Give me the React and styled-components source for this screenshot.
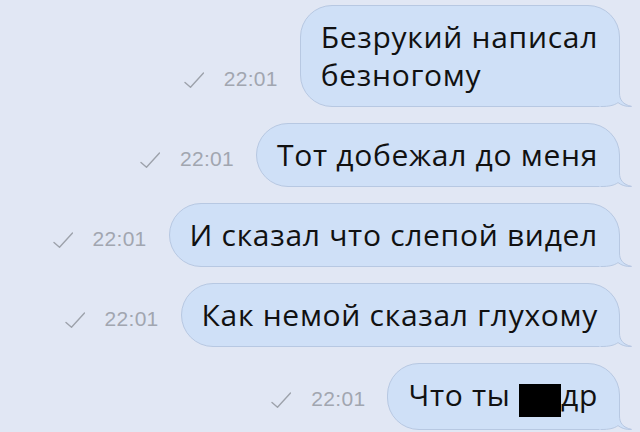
import React from 'react';
import styled, { createGlobalStyle } from 'styled-components';

const messages = [
    { id: 1, lines: ['Безрукий написал', 'безногому'], time: '22:01' },
    { id: 2, lines: ['Тот добежал до меня'], time: '22:01' },
    { id: 3, lines: ['И сказал что слепой видел'], time: '22:01' },
    { id: 4, lines: ['Как немой сказал глухому'], time: '22:01' },
    { id: 5, lines: ['Что ты ', 'др'], time: '22:01', censored: true },
];

const Check = () => (
    <svg width="20" height="16" viewBox="0 0 20 16" fill="none">
        <path d="M1 10.5 L6.5 15.2 L19.5 1" stroke="#9da2ab" strokeWidth="1.4" strokeLinecap="round" strokeLinejoin="round" />
    </svg>
);

const Tail = () => (
    <TailSvg width="34" height="28" viewBox="0 0 34 28">
        <path
            d="M20.5 0 L20.5 14 C20.5 21 24 25.5 32.5 27.4 C27 28 22 26 19 23.6 C15 26.5 10 27.5 2 27.5 L0 27.5 L0 0 Z"
            fill="#cfe0f7"
        />
        <path
            d="M20.5 0 L20.5 14 C20.5 21 24 25.5 32.5 27.4 C27 28 22 26 19 23.6 C15 26.5 10 27.5 2 27.5"
            fill="none"
            stroke="#b7c8e2"
            strokeWidth="1"
        />
    </TailSvg>
);

const App = () => {
    return (
        <>
            <GlobalStyle />
            <Chat>
                {messages.map((m) => (
                    <Row key={m.id}>
                        <Status>
                            <Check />
                            <Time>{m.time}</Time>
                        </Status>
                        <Bubble>
                            {m.censored ? (
                                <span>
                                    {m.lines[0]}
                                    <Redacted />
                                    {m.lines[1]}
                                </span>
                            ) : (
                                m.lines.map((line, i) => (
                                    <React.Fragment key={i}>
                                        {i > 0 && <br />}
                                        {line}
                                    </React.Fragment>
                                ))
                            )}
                            <Tail />
                        </Bubble>
                    </Row>
                ))}
            </Chat>
        </>
    );
};

export default App;

const GlobalStyle = createGlobalStyle`
    html, body {
        margin: 0;
        padding: 0;
        background: #e1e7f4;
    }
`;

const Chat = styled.div`
    width: 640px;
    height: 432px;
    overflow: hidden;
    background: #e1e7f4;
    display: flex;
    flex-direction: column;
    gap: 16px;
    padding: 5px 20px 0 0;
    box-sizing: border-box;
`;

const Row = styled.div`
    display: flex;
    justify-content: flex-end;
    align-items: last baseline;
    gap: 22px;
`;

const Status = styled.div`
    display: flex;
    align-items: baseline;
    gap: 20px;

    > svg {
        align-self: flex-end;
        margin-bottom: 1px;
    }
`;

const Time = styled.span`
    font-family: 'Liberation Sans', Arial, sans-serif;
    font-size: 21px;
    line-height: 21px;
    color: #a1a6b0;
    letter-spacing: 0.3px;
`;

const Bubble = styled.div`
    position: relative;
    background: #cfe0f7;
    border: 1px solid #b7c8e2;
    border-radius: 32px 32px 20px 32px;
    padding: 12px 21px 12px 20px;
    font-family: 'Open Sans', 'Liberation Sans', sans-serif;
    font-size: 30px;
    line-height: 38px;
    letter-spacing: 0.7px;
    color: #111;
    white-space: nowrap;
`;

const TailSvg = styled.svg`
    position: absolute;
    right: -14px;
    bottom: -1px;
    display: block;
`;

const Redacted = styled.span`
    display: inline-block;
    width: 42px;
    height: 33px;
    background: #000;
    vertical-align: -11px;
`;
